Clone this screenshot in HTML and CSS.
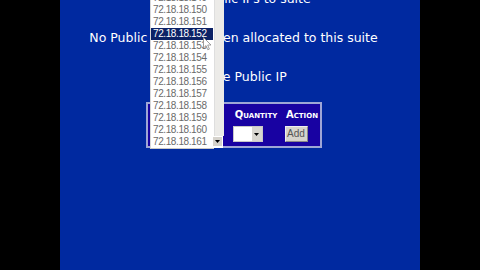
FILE: index.html
```html
<!DOCTYPE html>
<html>
<head>
<meta charset="utf-8">
<link rel="stylesheet" href="styles.css">
</head>
<body>
<div class="screen">
  <div class="panel">
    <div class="content">
      <div class="line first">Assign Public IPs to suite</div>
      <div class="line">No Public IPs have been allocated to this suite</div>
      <div class="line">Allocate Public IP</div>
      <div class="box">
        <div class="col col-ip">
          <div class="hdr">IP Address</div>
          <div class="cell"></div>
        </div>
        <div class="col col-qty">
          <div class="hdr">Quantity</div>
          <div class="cell"><div class="qsel"><span class="qarrow"><svg width="5" height="3" viewBox="0 0 5 3"><path d="M0 0H5L2.5 3Z" fill="#000"/></svg></span></div></div>
        </div>
        <div class="col col-act">
          <div class="hdr">Action</div>
          <div class="cell"><div class="btn">Add</div></div>
        </div>
      </div>
    </div>
    <div class="dropdown">
      <div class="list">
        <div class="opt">72.18.18.149</div>
        <div class="opt">72.18.18.150</div>
        <div class="opt">72.18.18.151</div>
        <div class="opt sel">72.18.18.152</div>
        <div class="opt">72.18.18.153</div>
        <div class="opt">72.18.18.154</div>
        <div class="opt">72.18.18.155</div>
        <div class="opt">72.18.18.156</div>
        <div class="opt">72.18.18.157</div>
        <div class="opt">72.18.18.158</div>
        <div class="opt">72.18.18.159</div>
        <div class="opt">72.18.18.160</div>
        <div class="opt last">72.18.18.161<span class="darrow"><svg width="5" height="3" viewBox="0 0 5 3"><path d="M0 0H5L2.5 3Z" fill="#000"/></svg></span></div>
      </div>
      <div class="scroll"></div>
      <svg class="cursor" width="9" height="14" viewBox="0 0 9 14"><path d="M0.5 0.5V11L3 8.6L4.8 12.8L6.4 12.1L4.7 8H8Z" fill="#fff" stroke="#888" stroke-width="0.8"/></svg>
    </div>
  </div>
</div>
</body>
</html>
```

FILE: styles.css
```css
html, body {
  margin: 0;
  padding: 0;
  background: #000;
  width: 480px;
  height: 270px;
  overflow: hidden;
}
.screen {
  display: flex;
  height: 270px;
}
.panel {
  position: relative;
  margin-left: 60px;
  width: 360px;
  height: 270px;
  background: #0029a0;
  overflow: hidden;
}
.content {
  display: flex;
  flex-direction: column;
  align-items: center;
  padding-right: 13px;
  font-family: "DejaVu Sans", Verdana, sans-serif;
  color: #fff;
}
.line {
  height: 39px;
  line-height: 39px;
  font-size: 12.5px;
  white-space: nowrap;
}
.line.first {
  margin-top: -21px;
}
.box {
  margin-top: 6px;
  width: 172px;
  height: 42px;
  background: #1802a2;
  border: 2px solid #9ea6d6;
  display: flex;
}
.col {
  display: flex;
  flex-direction: column;
  align-items: center;
}
.col-ip { width: 80px; }
.col-qty { width: 57px; }
.col-act { width: 35px; }
.hdr {
  height: 20px;
  line-height: 20px;
  margin-top: 1px;
  font-size: 10px;
  font-weight: bold;
  font-variant: small-caps;
  white-space: nowrap;
}
.cell {
  display: flex;
  justify-content: center;
  align-items: center;
  height: 18px;
}
.qsel {
  width: 30px;
  height: 16px;
  background: #fff;
  border: 1px solid #c8c8c8;
  box-sizing: border-box;
  display: flex;
  justify-content: flex-end;
  align-items: stretch;
  margin-right: 17px;
}
.qarrow {
  width: 10px;
  background: #d8d6d0;
  display: flex;
  align-items: center;
  justify-content: center;
}
.btn {
  width: 23px;
  height: 16px;
  background: #d6d3cc;
  color: #555;
  font-family: "Liberation Sans", Arial, sans-serif;
  font-size: 10px;
  line-height: 14px;
  text-align: center;
  box-sizing: border-box;
  border: 1px solid #eeeeee;
  border-right-color: #888;
  border-bottom-color: #888;
  margin-right: 12px;
}
.dropdown {
  position: absolute;
  left: 90px;
  top: -8px;
  width: 74px;
  height: 156px;
  display: flex;
}
.list {
  width: 63px;
  background: #fff;
  border-left: 1px solid #d8d8d8;
  border-bottom: 1px solid #c8c8c8;
  height: 156px;
}
.scroll {
  width: 10px;
  background: #ecebe8;
  height: 144px;
  border-left: 1px solid #dedede;
}
.opt {
  position: relative;
  height: 12px;
  line-height: 12px;
  font-family: "Liberation Sans", Arial, sans-serif;
  font-size: 10px;
  letter-spacing: -0.4px;
  color: #6a6a6a;
  padding-left: 2px;
  white-space: nowrap;
}
.opt.sel {
  background: #0c2266;
  color: #fff;
  margin-right: 1px;
}
.opt.last {
  width: 72px;
  background: #fff;
  box-sizing: border-box;
}
.darrow {
  position: absolute;
  right: 1px;
  top: 1px;
  width: 9px;
  height: 9px;
  background: #d6d3cc;
  display: flex;
  align-items: center;
  justify-content: center;
}
.cursor {
  position: absolute;
  left: 53px;
  top: 45px;
}
```
